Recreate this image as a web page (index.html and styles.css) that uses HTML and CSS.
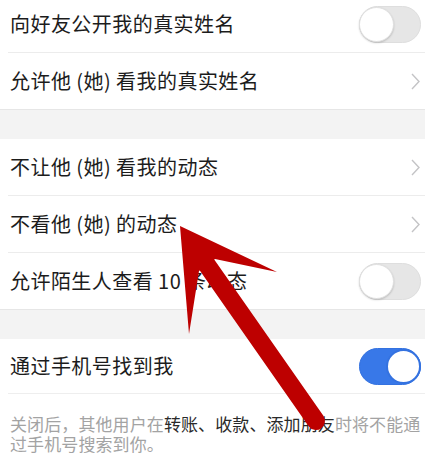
FILE: index.html
```html
<!DOCTYPE html>
<html lang="zh">
<head>
<meta charset="utf-8">
<link rel="stylesheet" href="styles.css">
</head>
<body>
<div class="page">
  <div class="section first">
    <div class="row"><span class="label">向好友公开我的真实姓名</span><span class="switch off"><span class="knob"></span></span></div>
    <div class="row last"><span class="label">允许他 (她) 看我的真实姓名</span><svg class="chev" viewBox="0 0 9 17"><polyline points="1,1 8,8.5 1,16"/></svg></div>
  </div>
  <div class="gap"></div>
  <div class="section">
    <div class="row"><span class="label">不让他 (她) 看我的动态</span><svg class="chev" viewBox="0 0 9 17"><polyline points="1,1 8,8.5 1,16"/></svg></div>
    <div class="row"><span class="label">不看他 (她) 的动态</span><svg class="chev" viewBox="0 0 9 17"><polyline points="1,1 8,8.5 1,16"/></svg></div>
    <div class="row last"><span class="label">允许陌生人查看 10 条动态</span><span class="switch off"><span class="knob"></span></span></div>
  </div>
  <div class="gap"></div>
  <div class="section">
    <div class="row"><span class="label">通过手机号找到我</span><span class="switch on"><span class="knob"></span></span></div>
  </div>
  <p class="note">关闭后，其他用户在<span class="strong">转账、收款、添加朋友</span>时将不能通过手机号搜索到你。</p>
  <svg class="arrow" viewBox="0 0 425 459" width="425" height="459">
    <line x1="207" y1="265" x2="316" y2="421" stroke="#bd0000" stroke-width="18" stroke-linecap="round"/>
    <polygon points="180,226 277,272 215,259 199,271 189,334" fill="#bd0000"/>
  </svg>
</div>
</body>
</html>
```
FILE: styles.css
```css
* { box-sizing: border-box; }
html, body { margin: 0; padding: 0; background: #ffffff; }
body { font-family: "Noto Sans CJK SC", "Noto Sans", sans-serif; color: #1c1c1c; }
.page { position: relative; width: 425px; height: 459px; overflow: hidden; }
.section { background: #fff; }
.section.first { margin-top: -4px; }
.row {
  display: flex; align-items: center; justify-content: space-between;
  height: 57px; margin-left: 8px; padding-left: 2px; padding-right: 4px;
  border-bottom: 1px solid #ececec;
}
.row.last { margin-left: 0; padding-left: 10px; border-bottom: 1px solid #e6e6e6; }
.label { font-size: 20px; letter-spacing: 0.45px; line-height: 1; }
.gap { height: 29px; background: #f3f3f3; }
.chev { width: 9px; height: 17px; margin-right: 1px; fill: none; stroke: #c4c4c6; stroke-width: 1.4; }
.switch {
  display: flex; align-items: center; width: 62px; height: 37px; border-radius: 19px; padding: 1px;
}
.switch.off { background: #e6e6e6; border: 1px solid #dedede; justify-content: flex-start; }
.switch.on { background: #3878e8; border: 1px solid #3472e0; justify-content: flex-end; }
.knob {
  width: 35px; height: 35px; border-radius: 50%; background: #fff;
  box-shadow: 0 1px 2px rgba(0,0,0,0.18);
}
.switch.off .knob { margin-left: -2px; border: 1px solid #e0e0e0; }
.switch.on .knob { margin-right: -2px; border: 2px solid #3472e0; box-shadow: none; }
.section:last-of-type .row { border-bottom: 1px solid #eeeeee; height: 55px; }
.note {
  margin: 0; padding: 20px 4px 0 10px; font-size: 17px; line-height: 20px; color: #a3a3a3;
  letter-spacing: 0.1px;
}
.strong { color: #2a2a2a; }
.arrow { position: absolute; left: 0; top: 0; }
```
